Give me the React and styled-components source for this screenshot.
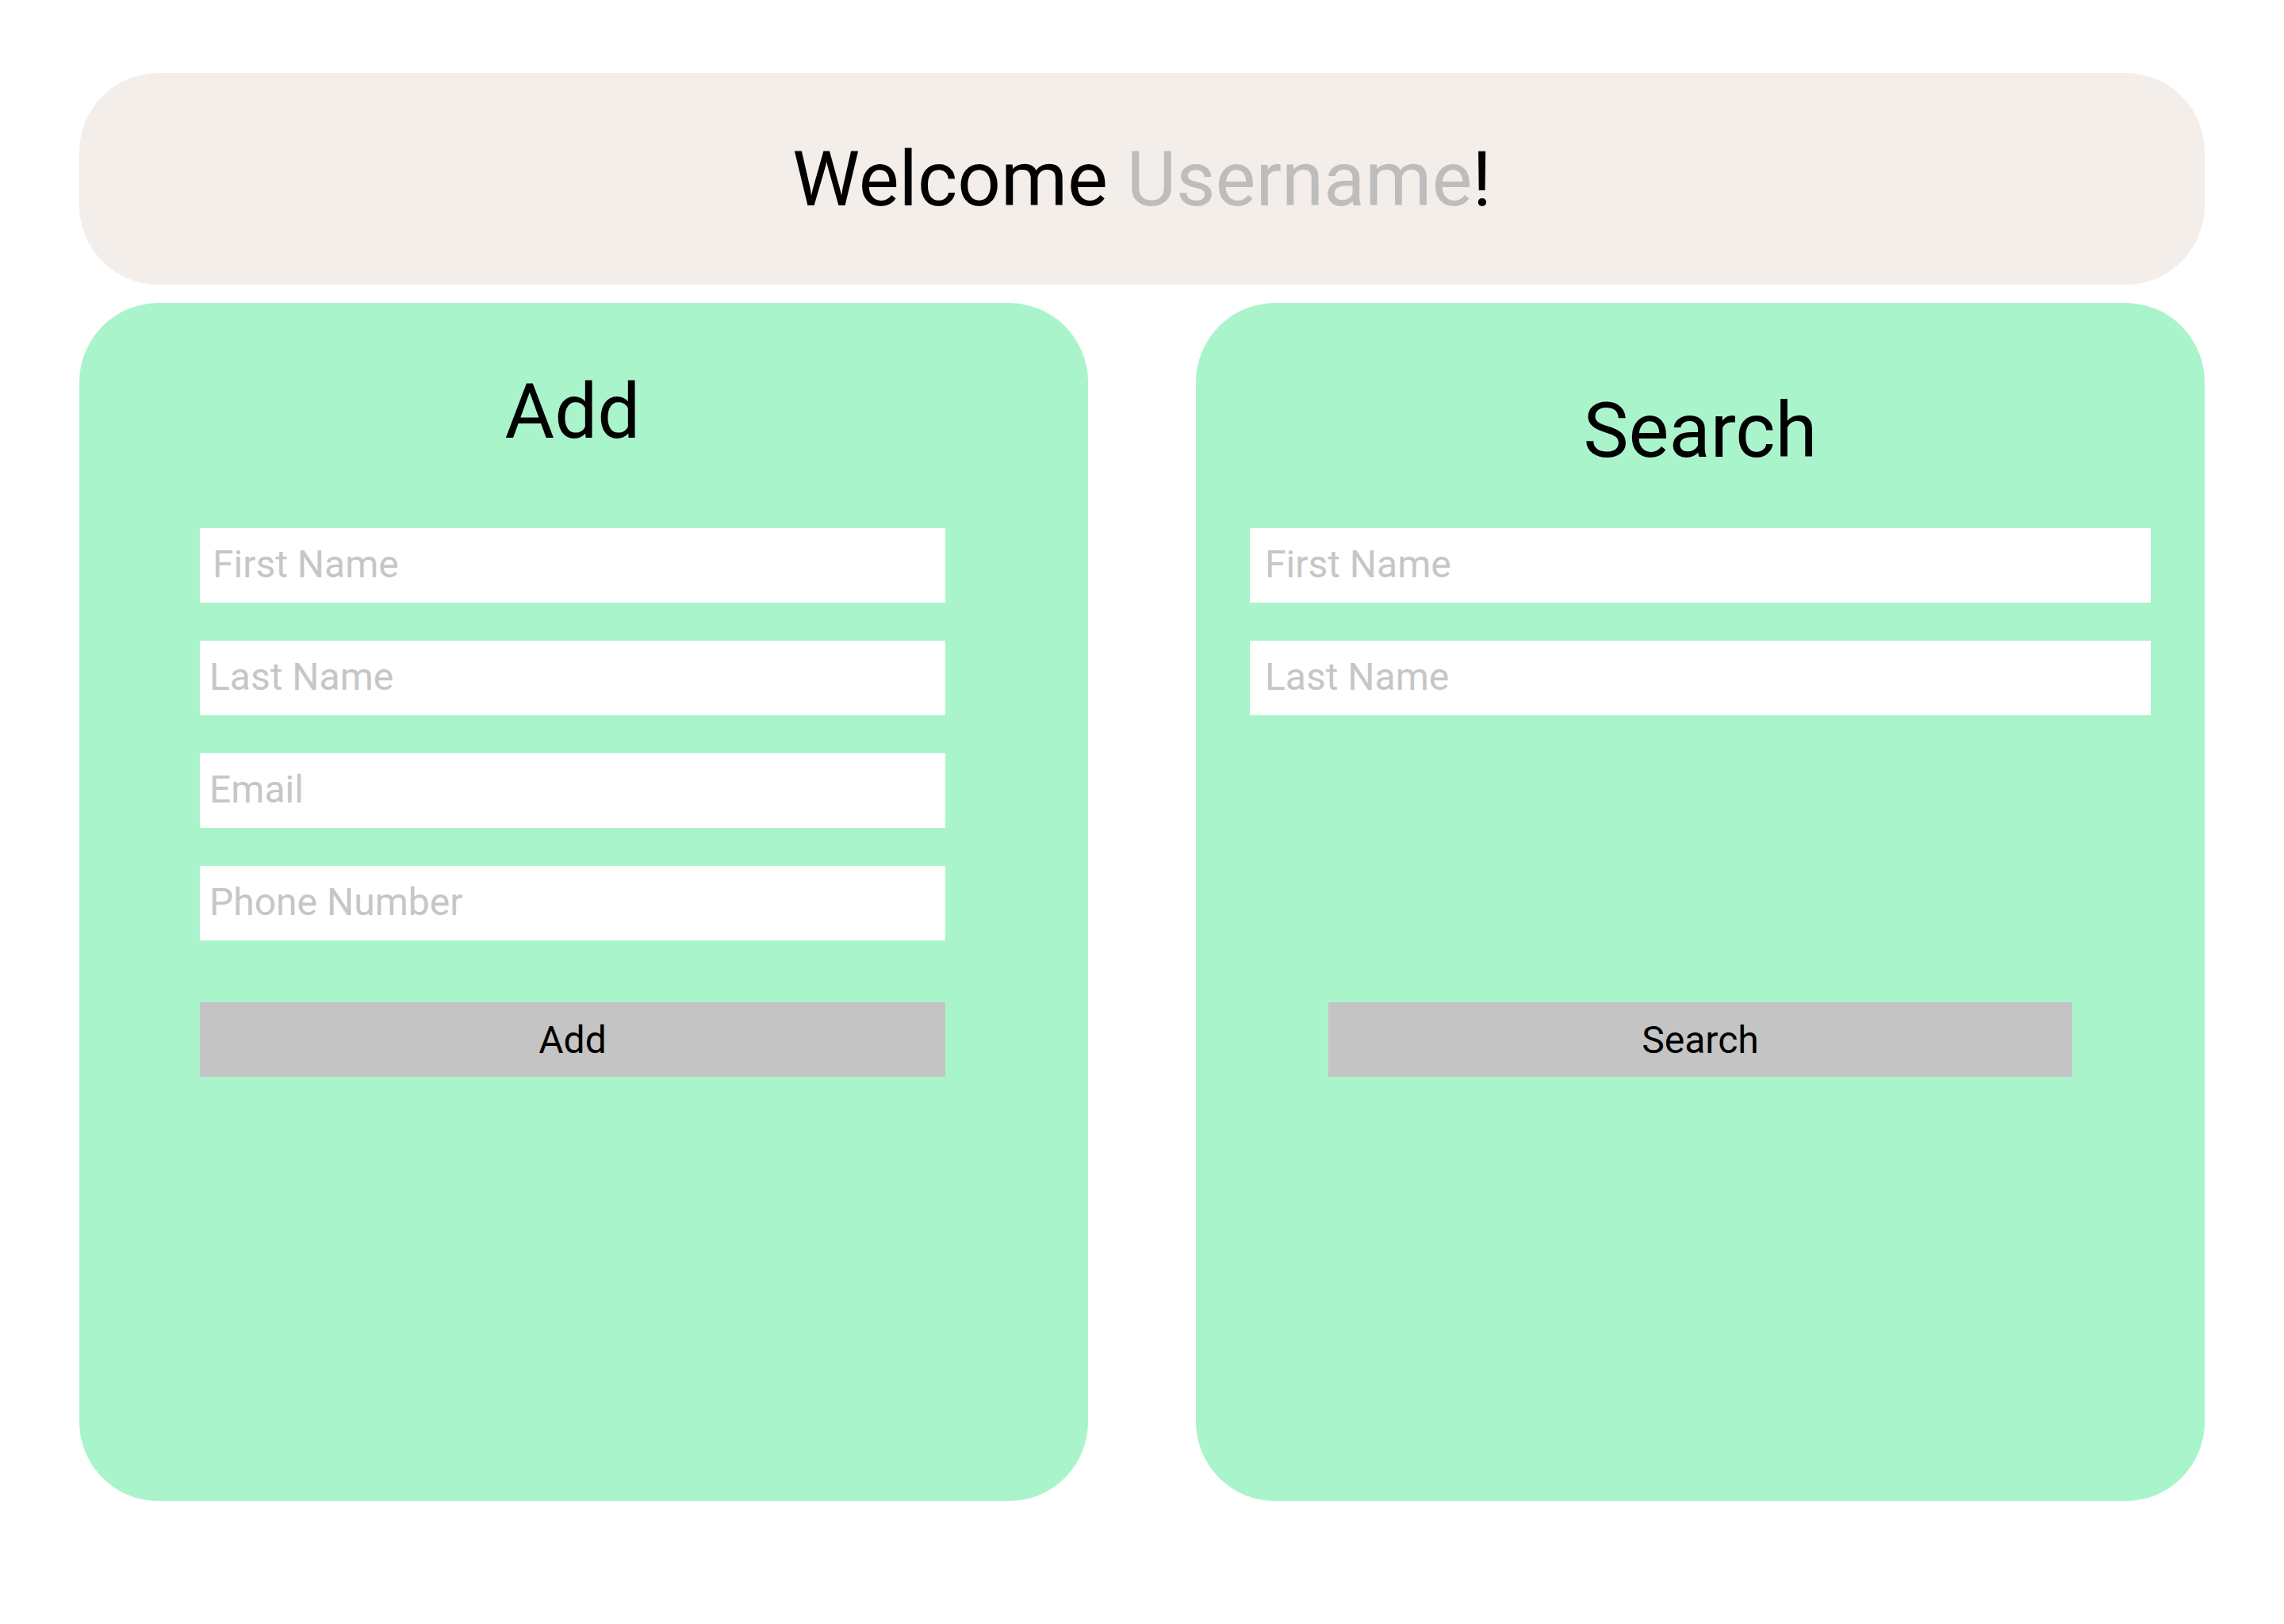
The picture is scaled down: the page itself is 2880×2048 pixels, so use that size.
import React from 'react';
import styled, { createGlobalStyle } from 'styled-components';

const GlobalStyle = createGlobalStyle`
  body {
    margin: 0;
    background: #ffffff;
    font-family: Roboto, 'Liberation Sans', sans-serif;
  }
`;

const Page = styled.div`
  display: flex;
  flex-direction: column;
  gap: 23px;
  padding: 92px 100px;
`;

const Banner = styled.header`
  height: 267px;
  border-radius: 100px;
  background: #f3eeea;
  display: flex;
  align-items: center;
  justify-content: center;

  h1 {
    margin: 0;
    font-size: 96px;
    font-weight: 400;
    color: #000;
  }

  span {
    color: #bdbdbd;
  }
`;

const Columns = styled.div`
  display: grid;
  grid-template-columns: 1272px 1272px;
  gap: 136px;
`;

const Card = styled.section`
  height: 1511px;
  box-sizing: border-box;
  border-radius: 100px;
  background: #aaf4cb;
  display: flex;
  flex-direction: column;
  padding: 0 ${({ $right }) => $right}px 0 ${({ $left }) => $left}px;
`;

const Title = styled.div`
  height: 284px;
  box-sizing: border-box;
  padding-top: ${({ $top }) => $top}px;
  text-align: center;

  h2 {
    margin: 0;
    font-size: 96px;
    font-weight: 400;
    line-height: 112px;
    color: #000;
  }
`;

const Fields = styled.div`
  height: 520px;
  display: flex;
  flex-direction: column;
  gap: 48px;
`;

const Field = styled.input`
  height: 94px;
  flex: none;
  box-sizing: border-box;
  border: none;
  outline: none;
  background: #fff;
  padding: 0 0 3px ${({ $pad }) => $pad}px;
  font-family: Roboto, 'Liberation Sans', sans-serif;
  font-size: 48px;
  color: #000;

  &::placeholder {
    color: #c6c6c6;
  }
`;

const Action = styled.button`
  align-self: center;
  width: ${({ $width }) => $width}px;
  height: 94px;
  margin-top: 78px;
  border: none;
  background: #c4c4c4;
  font-family: Roboto, 'Liberation Sans', sans-serif;
  font-size: 48px;
  color: #000;
  cursor: pointer;
`;

const App = () => {
  return (
    <>
      <GlobalStyle />
      <Page>
        <Banner>
          <h1>Welcome <span>Username</span>!</h1>
        </Banner>
        <Columns>
          <Card $left={152} $right={180}>
            <Title $top={81}>
              <h2>Add</h2>
            </Title>
            <Fields>
              <Field $pad={16} placeholder='First Name' />
              <Field $pad={12} placeholder='Last Name' />
              <Field $pad={12} placeholder='Email' />
              <Field $pad={12} placeholder='Phone Number' />
            </Fields>
            <Action $width={940}>Add</Action>
          </Card>
          <Card $left={68} $right={68}>
            <Title $top={105}>
              <h2>Search</h2>
            </Title>
            <Fields>
              <Field $pad={19} placeholder='First Name' />
              <Field $pad={19} placeholder='Last Name' />
            </Fields>
            <Action $width={938}>Search</Action>
          </Card>
        </Columns>
      </Page>
    </>
  );
};

export default App;
